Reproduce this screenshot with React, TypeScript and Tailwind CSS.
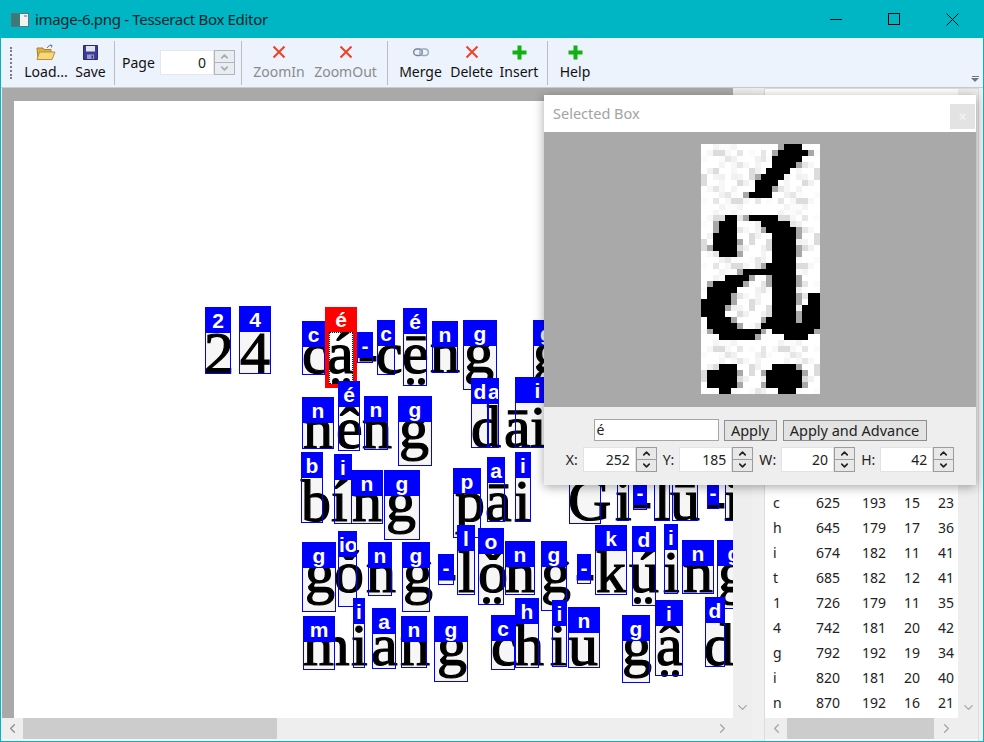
import { ChevronDown, ChevronLeft, ChevronRight, ChevronUp } from "lucide-react";

type Box = { x: number; y: number; r: number; b: number; t: string };
type Glyph = { c: string; x: number; base: number; dots?: boolean };

const OX = 14;
const OY = 101;

const boxes: Box[] = [
    { x: 205, y: 307, r: 231, b: 374, t: "2" },
    { x: 239, y: 306, r: 271, b: 374, t: "4" },
    { x: 302, y: 321, r: 325, b: 375, t: "c" },
    { x: 357, y: 332, r: 373, b: 363, t: "-" },
    { x: 377, y: 320, r: 395, b: 375, t: "c" },
    { x: 403, y: 308, r: 427, b: 386, t: "é" },
    { x: 432, y: 321, r: 458, b: 373, t: "n" },
    { x: 463, y: 320, r: 497, b: 390, t: "g" },
    { x: 533, y: 320, r: 560, b: 378, t: "g" },
    { x: 302, y: 397, r: 334, b: 449, t: "n" },
    { x: 364, y: 396, r: 388, b: 450, t: "n" },
    { x: 398, y: 396, r: 432, b: 466, t: "g" },
    { x: 471, y: 378, r: 489, b: 448, t: "d" },
    { x: 487, y: 378, r: 499, b: 448, t: "a" },
    { x: 515, y: 377, r: 560, b: 448, t: "i" },
    { x: 301, y: 452, r: 323, b: 523, t: "b" },
    { x: 334, y: 454, r: 352, b: 524, t: "i" },
    { x: 351, y: 470, r: 383, b: 524, t: "n" },
    { x: 384, y: 470, r: 420, b: 540, t: "g" },
    { x: 453, y: 468, r: 481, b: 538, t: "p" },
    { x: 487, y: 457, r: 505, b: 522, t: "a" },
    { x: 515, y: 452, r: 531, b: 522, t: "i" },
    { x: 569, y: 455, r: 601, b: 524, t: "G" },
    { x: 617, y: 452, r: 629, b: 521, t: "i" },
    { x: 633, y: 479, r: 647, b: 510, t: "-" },
    { x: 654, y: 452, r: 670, b: 521, t: "l" },
    { x: 672, y: 452, r: 698, b: 521, t: "u" },
    { x: 707, y: 479, r: 719, b: 509, t: "-" },
    { x: 725, y: 452, r: 745, b: 521, t: "i" },
    { x: 302, y: 542, r: 336, b: 612, t: "g" },
    { x: 338, y: 531, r: 357, b: 607, t: "io" },
    { x: 368, y: 542, r: 392, b: 596, t: "n" },
    { x: 402, y: 542, r: 430, b: 612, t: "g" },
    { x: 438, y: 554, r: 454, b: 585, t: "-" },
    { x: 457, y: 525, r: 475, b: 595, t: "l" },
    { x: 478, y: 528, r: 504, b: 605, t: "o" },
    { x: 505, y: 541, r: 535, b: 595, t: "n" },
    { x: 541, y: 541, r: 567, b: 611, t: "g" },
    { x: 577, y: 554, r: 591, b: 584, t: "-" },
    { x: 595, y: 525, r: 627, b: 595, t: "k" },
    { x: 632, y: 526, r: 656, b: 606, t: "d" },
    { x: 664, y: 524, r: 678, b: 594, t: "i" },
    { x: 682, y: 540, r: 714, b: 594, t: "n" },
    { x: 717, y: 540, r: 751, b: 609, t: "g" },
    { x: 303, y: 616, r: 335, b: 670, t: "m" },
    { x: 353, y: 598, r: 365, b: 668, t: "i" },
    { x: 372, y: 608, r: 396, b: 669, t: "a" },
    { x: 401, y: 616, r: 427, b: 668, t: "n" },
    { x: 434, y: 616, r: 468, b: 682, t: "g" },
    { x: 491, y: 615, r: 515, b: 670, t: "c" },
    { x: 515, y: 598, r: 539, b: 668, t: "h" },
    { x: 552, y: 600, r: 567, b: 667, t: "i" },
    { x: 568, y: 607, r: 600, b: 668, t: "n" },
    { x: 622, y: 615, r: 650, b: 683, t: "g" },
    { x: 655, y: 600, r: 683, b: 676, t: "i" },
    { x: 705, y: 597, r: 725, b: 667, t: "d" },
];

const glyphs: Glyph[] = [
    { c: "2", x: 204, base: 373 },
    { c: "4", x: 240, base: 373 },
    { c: "c", x: 302, base: 373 },
    { c: "á", x: 327, base: 373, dots: true },
    { c: "-", x: 358, base: 373 },
    { c: "c", x: 376, base: 373 },
    { c: "ē", x: 402, base: 373, dots: true },
    { c: "n", x: 430, base: 372 },
    { c: "g", x: 464, base: 372 },
    { c: "g", x: 533, base: 372 },
    { c: "n", x: 303, base: 448 },
    { c: "ê", x: 336, base: 448 },
    { c: "n", x: 362, base: 448 },
    { c: "g", x: 399, base: 448 },
    { c: "d", x: 471, base: 447 },
    { c: "ā", x: 504, base: 447 },
    { c: "i", x: 530, base: 447 },
    { c: "b", x: 301, base: 521 },
    { c: "í", x: 331, base: 521 },
    { c: "n", x: 352, base: 521 },
    { c: "g", x: 386, base: 521 },
    { c: "p", x: 455, base: 521 },
    { c: "ā", x: 485, base: 521 },
    { c: "i", x: 514, base: 521 },
    { c: "G", x: 568, base: 520 },
    { c: "i", x: 615, base: 520 },
    { c: "-", x: 632, base: 520 },
    { c: "l", x: 654, base: 520 },
    { c: "ū", x: 670, base: 520 },
    { c: "-", x: 706, base: 520 },
    { c: "i", x: 724, base: 520 },
    { c: "g", x: 305, base: 592 },
    { c: "ǒ", x: 334, base: 592 },
    { c: "n", x: 366, base: 592 },
    { c: "g", x: 403, base: 592 },
    { c: "-", x: 437, base: 592 },
    { c: "l", x: 458, base: 592 },
    { c: "ǒ", x: 478, base: 592, dots: true },
    { c: "n", x: 505, base: 592 },
    { c: "g", x: 541, base: 592 },
    { c: "-", x: 575, base: 592 },
    { c: "k", x: 596, base: 592 },
    { c: "ú", x: 629, base: 592, dots: true },
    { c: "i", x: 663, base: 592 },
    { c: "n", x: 683, base: 592 },
    { c: "g", x: 718, base: 592 },
    { c: "m", x: 303, base: 665 },
    { c: "i", x: 351, base: 665 },
    { c: "ā", x: 371, base: 665 },
    { c: "n", x: 400, base: 665 },
    { c: "g", x: 437, base: 665 },
    { c: "c", x: 491, base: 665 },
    { c: "h", x: 514, base: 665 },
    { c: "i", x: 550, base: 665 },
    { c: "ū", x: 568, base: 665 },
    { c: "g", x: 622, base: 665 },
    { c: "â", x: 656, base: 665, dots: true },
    { c: "d", x: 704, base: 665 },
];

const tableRows = [
    ["c", "625", "193", "15", "23"],
    ["h", "645", "179", "17", "36"],
    ["i", "674", "182", "11", "41"],
    ["t", "685", "182", "12", "41"],
    ["1", "726", "179", "11", "35"],
    ["4", "742", "181", "20", "42"],
    ["g", "792", "192", "19", "34"],
    ["i", "820", "181", "20", "40"],
    ["n", "870", "192", "16", "21"],
];

// black runs of the zoomed crop, one list per row of the 20x42 image
const pixelRows: number[][][] = [
    [[14, 16]], [[13, 17]], [[12, 16]], [[12, 15]], [[11, 14]], [[10, 13]], [[9, 12]], [[9, 11]], [[8, 11]],
    [], [], [],
    [[4, 5], [8, 12]], [[3, 5], [10, 14]], [[3, 5], [11, 15]], [[2, 5], [12, 15]], [[2, 5], [12, 15]], [[2, 5], [12, 15]],
    [[3, 5], [12, 15]], [[12, 15]], [[11, 15]], [[7, 15]], [[4, 7], [12, 15]], [[2, 6], [12, 15]], [[1, 5], [12, 15]],
    [[1, 4], [12, 15], [18, 19]], [[0, 4], [12, 15], [18, 19]], [[0, 3], [12, 15], [17, 19]], [[0, 3], [12, 15], [17, 19]],
    [[1, 4], [11, 15], [17, 19]], [[1, 5], [10, 19]], [[2, 9], [12, 18]], [[3, 8], [14, 17]],
    [], [], [], [],
    [[3, 5], [12, 15]], [[1, 5], [11, 16]], [[1, 5], [11, 16]], [[1, 5], [11, 16]], [[3, 4], [13, 15]],
];

const SelectedGlyph = () => {
    const shades = ["#ffffff", "#ffffff", "#fbfbfb", "#f7f7f7", "#f1f1f1", "#e6e6e6", "#ffffff", "#dcdcdc", "#ffffff", "#f4f4f4", "#ffffff"];
    const cells: React.ReactNode[] = [];
    pixelRows.forEach((runs, y) => {
        for (let x = 0; x < 20; x++) {
            const black = runs.some(([a, b]) => x >= a && x <= b);
            const edge = runs.some(([a, b]) => x === a - 1 || x === b + 1);
            const hash = (x * x * 31 + y * y * 17 + x * y * 7 + x * 3 + y * 11) % 11;
            const fill = black ? "#000000" : edge && hash % 3 === 0 ? "#a8a8a8" : shades[hash];
            cells.push(<rect key={`${x}-${y}`} x={x * 6} y={y * 6} width={6} height={6} fill={fill} />);
        }
    });
    return (
        <svg width="119" height="250" viewBox="0 0 120 252" shapeRendering="crispEdges" className="block">
            {cells}
        </svg>
    );
};

const FolderIcon = () => (
    <svg width="20" height="17" viewBox="0 0 20 17">
        <path d="M1 4h6l1 1.500h7V15H2z" fill="#e0b040" stroke="#a88030" />
        <path d="M3.500 8H19l-3 7.500H1z" fill="#f6d77a" stroke="#b8903a" />
        <path d="M11 4c1-2 3-3 5-2.500M16 1.500l-.5 2M16 1.500l-2-.5" fill="none" stroke="#5577aa" />
    </svg>
);

const SaveIcon = () => (
    <svg width="15" height="15" viewBox="0 0 15 15">
        <path d="M0.500 0.500h14v14h-14z" fill="#3c3c9c" stroke="#2a2a70" />
        <path d="M3 1h9v5.500H3z" fill="#dfe3f3" />
        <path d="M4 9.500h7V14H4z" fill="#9a9ac8" />
        <path d="M8.500 10.500h1.500v3H8.500z" fill="#333377" />
    </svg>
);

const RedX = () => (
    <svg width="14" height="14" viewBox="0 0 14 14">
        <path d="M1.500 1.500l11 11M12.500 1.500l-11 11" stroke="#f0402a" strokeWidth="2" fill="none" />
    </svg>
);

const GreenPlus = () => (
    <svg width="15" height="15" viewBox="0 0 15 15">
        <path d="M5.500 0.500h4v5h5v4h-5v5h-4v-5h-5v-4h5z" fill="#12b012" />
    </svg>
);

const LinkIcon = () => (
    <svg width="16" height="9" viewBox="0 0 16 9">
        <rect x="0.700" y="1" width="8.500" height="6.500" rx="3.200" fill="none" stroke="#74849c" strokeWidth="1.400" />
        <rect x="6.800" y="1" width="8.500" height="6.500" rx="3.200" fill="none" stroke="#9aa8bc" strokeWidth="1.400" />
    </svg>
);

const ToolButton = ({ label, icon, disabled, className }: { label: string; icon: React.ReactNode; disabled?: boolean; className: string }) => (
    <div className={`flex flex-col items-center -mt-px ${className}`}>
        <div className="h-[19px] flex items-center justify-center">{icon}</div>
        <span className={`text-[14px] leading-[20px] whitespace-nowrap ${disabled ? "text-[#8b8b8b]" : "text-[#111111]"}`}>{label}</span>
    </div>
);

const Separator = () => <div className="w-px h-[44px] bg-[#b9bdc2]" />;

const Spin = ({ value, x }: { value: string; x: string }) => (
    <div className="flex items-center">
        <span className="text-[14px] text-[#222222]">{x}</span>
        <div className="flex h-[25px] ml-[5px]">
            <div className="w-[53px] bg-white border border-[#e2e2e2] text-[14px] text-right pr-[5px] leading-[23px] text-[#222222]">{value}</div>
            <div className="w-[21px] flex flex-col border border-[#9c9c9c] bg-[#e8e8e8]">
                <div className="flex-1 flex items-center justify-center border-b border-[#9c9c9c]">
                    <ChevronUp size={11} strokeWidth={3.5} className="text-[#222222]" />
                </div>
                <div className="flex-1 flex items-center justify-center">
                    <ChevronDown size={11} strokeWidth={3.5} className="text-[#222222]" />
                </div>
            </div>
        </div>
    </div>
);

const Canvas = () => (
    <div className="relative w-full h-full bg-white overflow-hidden">
        {boxes.map((b, i) => (
            <div
                key={i}
                className="absolute bg-[#f6f6f6]"
                style={{ left: b.x - OX, top: b.y - OY, width: b.r - b.x, height: b.b - b.y }}
            />
        ))}
        {glyphs.map((g, i) => (
            <div key={i}>
                <span
                    className="absolute text-[60px] leading-none text-black blur-[0.5px] [-webkit-text-stroke:1.2px_black] font-['Liberation_Serif',serif]"
                    style={{ left: g.x - OX, top: g.base - 50 - OY }}
                >
                    {g.c}
                </span>
                {g.dots && (
                    <>
                        <span className="absolute w-[7px] h-[7px] rounded-full bg-black" style={{ left: g.x + 5 - OX, top: g.base + 5 - OY }} />
                        <span className="absolute w-[7px] h-[7px] rounded-full bg-black" style={{ left: g.x + 16 - OX, top: g.base + 5 - OY }} />
                    </>
                )}
            </div>
        ))}
        {boxes.map((b, i) => (
            <div
                key={i}
                className="absolute border border-[#0000ff]"
                style={{ left: b.x - OX, top: b.y - OY, width: b.r - b.x, height: b.b - b.y }}
            >
                <div className="h-[25px] bg-[#0000ff] text-white text-[21px] leading-[26px] font-bold text-center overflow-hidden font-['Liberation_Sans',sans-serif]">
                    {b.t}
                </div>
            </div>
        ))}
        {/* selected box */}
        <div className="absolute left-[311px] top-[206px] w-[32px] h-[81px] border-4 border-[#ff0000]">
            <div className="h-[21px] bg-[#ff0000] text-white text-[21px] leading-[18px] font-bold text-center font-['Liberation_Sans',sans-serif]">é</div>
            <div className="h-[52px] border border-dotted border-black" />
        </div>
        <div className="absolute left-[324px] top-[280px] w-[22px] h-[70px] border border-[#0000ff]">
            <div className="h-[25px] bg-[#0000ff] text-white text-[21px] leading-[26px] font-bold text-center font-['Liberation_Sans',sans-serif]">é</div>
        </div>
    </div>
);

const App = () => {
    return (
        <div className="relative w-[984px] h-[742px] overflow-hidden flex flex-col bg-[#f0f0f0] border-x border-b border-[#00b5c4] font-['Noto_Sans','Open_Sans',sans-serif]">
            {/* title bar */}
            <div className="h-[38px] bg-[#00b5c4] flex items-center shrink-0">
                <svg width="18" height="14" viewBox="0 0 18 14" className="ml-[10px] mt-[1px]">
                    <rect x="0.500" y="0.500" width="17" height="13" fill="#f2f2f2" stroke="#62707a" />
                    <rect x="1" y="1" width="8" height="12" fill="#3c7a78" />
                    <rect x="13" y="2" width="3" height="2" fill="#9fb2b8" />
                </svg>
                <span className="ml-[6px] pt-px text-[15px] tracking-[-0.32px] text-[#06262c]">image-6.png - Tesseract Box Editor</span>
                <div className="ml-auto flex items-center mr-[24px] gap-[46px]">
                    <div className="w-[12px] h-px bg-black" />
                    <div className="w-[12px] h-[12px] border border-black" />
                    <svg width="13" height="13" viewBox="0 0 13 13">
                        <path d="M0.500 0.500l12 12M12.500 0.500l-12 12" stroke="#000000" fill="none" />
                    </svg>
                </div>
            </div>

            {/* toolbar */}
            <div className="h-[50px] bg-[#ecf3fc] border-b border-[#c9cdd2] flex items-center shrink-0 relative">
                <div className="ml-[9px] w-[2px] h-[32px] border-l-2 border-dotted border-[#7c7c7c]" />
                <ToolButton label="Load..." icon={<FolderIcon />} className="ml-[13px] w-[42px]" />
                <ToolButton label="Save" icon={<SaveIcon />} className="ml-[8px] w-[31px]" />
                <div className="ml-[8px]"><Separator /></div>
                <span className="ml-[7px] w-[32px] text-[14px] text-[#111111]">Page</span>
                <div className="ml-[6px] flex h-[25px]">
                    <div className="w-[54px] bg-white border border-[#e4e8ee] text-right pr-[7px] text-[14px] leading-[23px] text-[#222222]">0</div>
                    <div className="w-[21px] flex flex-col border border-[#b4b4b4] bg-[#e8edf3]">
                        <div className="flex-1 flex items-center justify-center border-b border-[#b4b4b4]">
                            <ChevronUp size={11} strokeWidth={3.5} className="text-[#a8a8a8]" />
                        </div>
                        <div className="flex-1 flex items-center justify-center">
                            <ChevronDown size={11} strokeWidth={3.5} className="text-[#a8a8a8]" />
                        </div>
                    </div>
                </div>
                <div className="ml-[6px]"><Separator /></div>
                <ToolButton label="ZoomIn" icon={<RedX />} disabled className="ml-[11px] w-[52px]" />
                <ToolButton label="ZoomOut" icon={<RedX />} disabled className="ml-[8px] w-[65px]" />
                <div className="ml-[9px]"><Separator /></div>
                <ToolButton label="Merge" icon={<LinkIcon />} className="ml-[11px] w-[43px]" />
                <ToolButton label="Delete" icon={<RedX />} className="ml-[8px] w-[43px]" />
                <ToolButton label="Insert" icon={<GreenPlus />} className="ml-[8px] w-[36px]" />
                <div className="ml-[10px]"><Separator /></div>
                <ToolButton label="Help" icon={<GreenPlus />} className="ml-[11px] w-[32px]" />
                <div className="absolute right-[4px] bottom-[5px] flex flex-col items-center gap-px">
                    <div className="w-[7px] h-px bg-[#777777]" />
                    <div className="w-0 h-0 border-x-[4px] border-x-transparent border-t-[4px] border-t-[#777777]" />
                </div>
            </div>

            {/* main area */}
            <div className="flex-1 flex min-h-0">
                <div className="w-[751px] flex flex-col shrink-0 pl-px">
                    <div className="flex-1 flex min-h-0">
                        <div className="w-[731px] bg-[#a9a9a9] pl-[12px] pt-[13px]">
                            <Canvas />
                        </div>
                        <div className="flex-1 bg-[#eeeeee] flex items-end justify-center pb-[3px]">
                            <ChevronDown size={15} className="text-[#a6a6a6]" />
                        </div>
                    </div>
                    <div className="h-[23px] flex bg-[#eeeeee] shrink-0 border-b-2 border-[#f6f6f6]">
                        <div className="w-[21px] flex items-center justify-center">
                            <ChevronLeft size={15} className="text-[#8c8c8c]" />
                        </div>
                        <div className="w-[254px] bg-[#cccccc]" />
                        <div className="w-[456px] flex items-center justify-end pr-[3px]">
                            <ChevronRight size={15} className="text-[#a6a6a6]" />
                        </div>
                    </div>
                </div>

                <div className="w-[12px] bg-[#f0f0f0] shrink-0" />

                <div className="flex-1 flex flex-col border border-[#dcdcdc] border-b-0 mr-[4px] bg-white">
                    <div className="flex-1 flex min-h-0">
                        <div className="flex-1 flex flex-col justify-end pb-[3px] bg-white">
                            {tableRows.map((row, i) => (
                                <div key={i} className="h-[25px] grid grid-cols-[43px_24px_46px_34px_34px] text-[14px] leading-[25px] text-[#222222] pl-[8px]">
                                    <span>{row[0]}</span>
                                    <span className="text-right">{row[1]}</span>
                                    <span className="text-right">{row[2]}</span>
                                    <span className="text-right">{row[3]}</span>
                                    <span className="text-right">{row[4]}</span>
                                </div>
                            ))}
                        </div>
                        <div className="w-[20px] bg-[#eeeeee] flex items-end justify-center pb-[3px]">
                            <ChevronDown size={15} className="text-[#a6a6a6]" />
                        </div>
                    </div>
                    <div className="h-[23px] flex bg-[#eeeeee] shrink-0 border-b-2 border-white">
                        <div className="w-[22px] flex items-center justify-center">
                            <ChevronLeft size={15} className="text-[#a6a6a6]" />
                        </div>
                        <div className="w-[147px] bg-[#cccccc]" />
                        <div className="w-[24px] flex items-center justify-center">
                            <ChevronRight size={15} className="text-[#a6a6a6]" />
                        </div>
                    </div>
                </div>
            </div>

            {/* selected box dialog */}
            <div className="absolute left-[543px] top-[95px] w-[432px] h-[390px] flex flex-col shadow-[0_2px_10px_rgba(0,0,0,0.35)]">
                <div className="h-[37px] bg-white flex items-center justify-between pl-[9px] pr-[1px] pt-[1px] shrink-0">
                    <span className="text-[14.5px] text-[#a3a3a3]">Selected Box</span>
                    <div className="w-[25px] h-[25px] bg-[#e3e3e3] flex items-center justify-center text-[14px] leading-none text-[#f6f6f6] mt-[5px]">×</div>
                </div>
                <div className="h-[275px] bg-[#a9a9a9] flex items-start justify-center pt-[12px] pl-[1px] shrink-0">
                    <SelectedGlyph />
                </div>
                <div className="flex-1 bg-[#eeeeee] flex flex-col items-center">
                    <div className="flex items-center mt-[12px] h-[22px]">
                        <div className="w-[125px] h-[22px] bg-white border border-[#a6a6a6] text-[14px] leading-[20px] pl-[2px] text-[#222222]">é</div>
                        <div className="ml-[5px] w-[53px] h-[21px] bg-[#e3e3e3] border border-[#8f8f8f] text-[14.5px] leading-[19px] text-center text-[#222222]">Apply</div>
                        <div className="ml-[6px] w-[144px] h-[21px] bg-[#e3e3e3] border border-[#8f8f8f] text-[14.5px] leading-[19px] text-center text-[#222222]">Apply and Advance</div>
                    </div>
                    <div className="flex items-center gap-[6px] mt-[6px]">
                        <Spin x="X:" value="252" />
                        <Spin x="Y:" value="185" />
                        <Spin x="W:" value="20" />
                        <Spin x="H:" value="42" />
                    </div>
                </div>
            </div>
        </div>
    );
};

export default App;
